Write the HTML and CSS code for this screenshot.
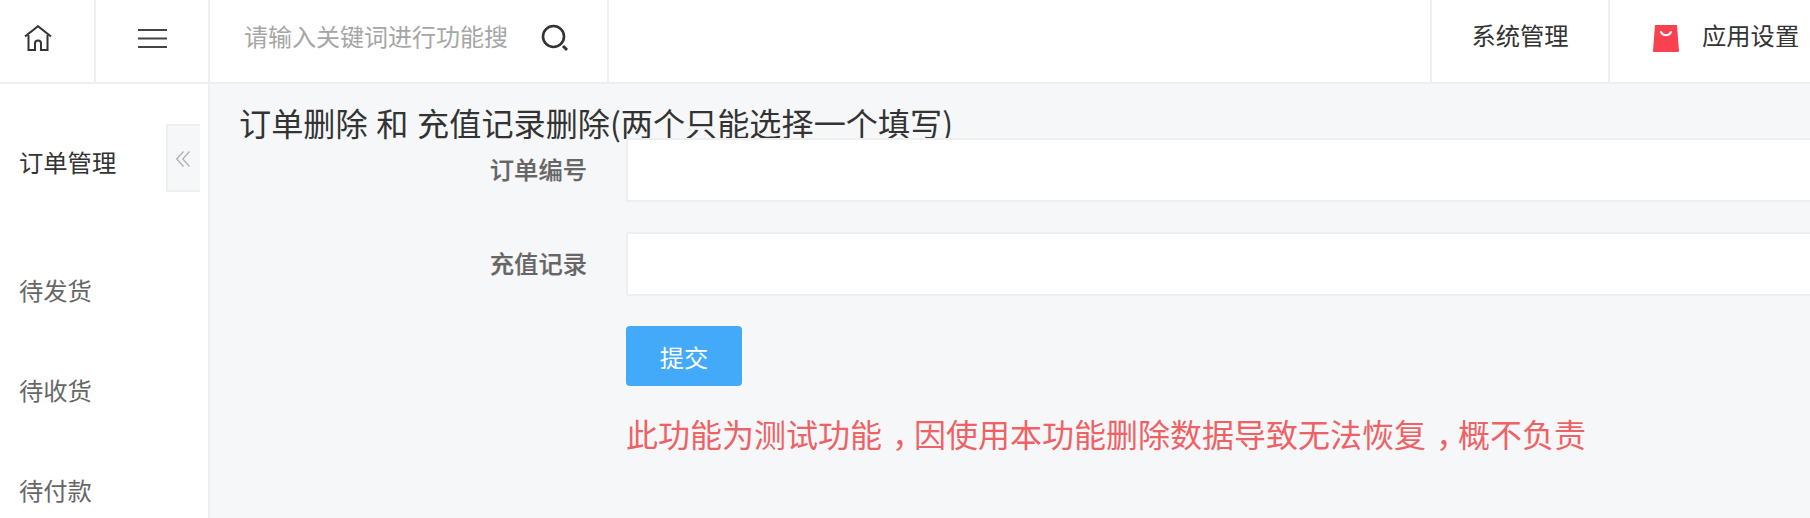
FILE: index.html
```html
<!DOCTYPE html>
<html lang="zh-CN">
<head>
  <meta charset="UTF-8">
  <meta name="viewport" content="width=device-width, initial-scale=1.0">
  <title>订单删除</title>
  <link rel="stylesheet" href="styles.css">
</head>
<body>
  <div class="topbar">
    <a class="cell cell-home">
      <svg width="28" height="26" viewBox="0 0 28 26" fill="none" stroke="#333" stroke-width="2">
        <path d="M1 11.5L14 1.2L27 11.5"/>
        <path d="M4.5 10V25H11V18.5a3 3 0 0 1 6 0V25H23.5V10"/>
      </svg>
    </a>
    <a class="cell cell-menu">
      <svg width="29" height="20" viewBox="0 0 29 20" fill="none" stroke="#444" stroke-width="2">
        <path d="M0 2H29M0 10.500H29M0 19H29"/>
      </svg>
    </a>
    <div class="cell cell-search">
      <input class="search-input" type="text" placeholder="请输入关键词进行功能搜索">
      <svg class="search-icon" width="28" height="28" viewBox="0 0 28 28" fill="none" stroke="#333">
        <circle cx="12.500" cy="12.500" r="10.500" stroke-width="2.600"/>
        <path d="M22 22L26 26" stroke-width="3"/>
      </svg>
    </div>
    <div class="spacer"></div>
    <a class="cell cell-system">系统管理</a>
    <a class="cell cell-app">
      <svg class="bag-icon" width="26" height="27" viewBox="0 0 26 27">
        <path d="M2 0H24L26 26a1 1 0 0 1-1 1H1a1 1 0 0 1-1-1Z" fill="#f9414f"/>
        <path d="M8 7a5.500 5.500 0 0 0 10 0" fill="none" stroke="#fff" stroke-width="2" stroke-linecap="round"/>
      </svg>
      <span>应用设置</span>
    </a>
  </div>

  <div class="main">
    <div class="sidebar">
      <div class="side-title">订单管理</div>
      <a class="side-item">待发货</a>
      <a class="side-item">待收货</a>
      <a class="side-item">待付款</a>
      <div class="collapse">
        <svg width="14" height="16" viewBox="0 0 14 16" fill="none" stroke="#b5b5b5" stroke-width="1.500">
          <path d="M7.500 0.500L0.800 8L7.500 15.500M13.500 0.500L6.800 8L13.500 15.500"/>
        </svg>
      </div>
    </div>

    <div class="content">
      <h3 class="page-title">订单删除 和 充值记录删除(两个只能选择一个填写)</h3>
      <form class="form">
        <div class="form-row">
          <label class="form-label">订单编号</label>
          <input class="form-input" type="text">
        </div>
        <div class="form-row">
          <label class="form-label">充值记录</label>
          <input class="form-input" type="text">
        </div>
        <div class="form-row">
          <span class="form-label"></span>
          <button class="btn" type="button">提交</button>
        </div>
        <div class="form-row">
          <span class="form-label"></span>
          <span class="warning">此功能为测试功能<span class="comma">，</span>因使用本功能删除数据导致无法恢复<span class="comma">，</span>概不负责</span>
        </div>
      </form>
    </div>
  </div>
</body>
</html>
```

FILE: styles.css
```css
html, body {
  height: 100%;
  margin: 0;
  overflow: hidden;
}
body {
  font-family: "Noto Sans CJK SC", "Liberation Sans", sans-serif;
  font-size: 24.3px;
  color: #333;
  background: #f6f7f8;
}

/* top bar */
.topbar {
  display: flex;
  height: 82px;
  background: #fff;
  border-bottom: 2px solid #eee;
}
.cell {
  display: flex;
  align-items: center;
  justify-content: center;
  box-sizing: border-box;
  flex: none;
}
.cell-home {
  width: 96px;
  padding: 0 0 6px 24px;
  border-right: 2px solid #eee;
  justify-content: flex-start;
}
.cell-menu {
  width: 114px;
  padding: 0 0 6px 42px;
  border-right: 2px solid #eee;
  justify-content: flex-start;
}
.cell-search {
  width: 399px;
  padding: 0 38px 12px 34px;
  border-right: 2px solid #eee;
  justify-content: space-between;
}
.search-input {
  width: 263px;
  border: none;
  outline: none;
  padding: 0;
  background: transparent;
  font-family: inherit;
  font-size: 24px;
}
.search-input::placeholder {
  color: #a6a6a6;
}
.search-icon {
  margin-top: 5px;
}
.spacer {
  flex: 1;
}
.cell-system {
  width: 178px;
  padding: 0 0 14px 0;
  border-left: 2px solid #eee;
}
.cell-app {
  width: 202px;
  padding: 0 0 14px 43px;
  gap: 23px;
  justify-content: flex-start;
  border-left: 2px solid #eee;
}
.bag-icon {
  margin-top: 8px;
}

/* sidebar */
.main {
  display: flex;
  height: 434px;
}
.sidebar {
  position: relative;
  box-sizing: border-box;
  width: 210px;
  flex: none;
  padding-left: 19px;
  background: #fff;
  border-right: 2px solid #eee;
}
.side-title {
  margin-top: 60px;
  line-height: 36px;
  margin-bottom: 92px;
}
.side-item {
  display: block;
  line-height: 36px;
  margin-bottom: 64px;
  color: #666;
}
.collapse {
  position: absolute;
  left: 166px;
  top: 40px;
  box-sizing: border-box;
  width: 34px;
  height: 68px;
  background: #f6f7f8;
  border: 2px solid #eee;
  border-right: none;
  display: flex;
  align-items: center;
  justify-content: center;
  padding: 2px 2px 0 0;
}

/* form */
.content {
  flex: 1;
  min-width: 0;
  overflow: hidden;
}
.page-title {
  margin: 22px 0 0 29px;
  font-size: 32.15px;
  font-weight: normal;
  line-height: 32px;
  word-spacing: 1.5px;
  color: #333;
}
.form-row {
  display: flex;
  align-items: center;
  margin-bottom: 30px;
}
.form-label {
  position: relative;
  top: -2px;
  width: 377px;
  flex: none;
  text-align: right;
  font-weight: 500;
  -webkit-text-stroke: 0.2px #666;
  color: #666;
  margin-right: 39px;
}
.form-input {
  box-sizing: border-box;
  width: 1200px;
  height: 64px;
  flex: none;
  background: #fff;
  border: 2px solid #eee;
  border-radius: 2px;
  outline: none;
}
.btn {
  width: 116px;
  height: 60px;
  border: none;
  border-radius: 4px;
  background: #42aaf8;
  color: #fff;
  font-family: inherit;
  font-size: 24.3px;
}
.warning {
  margin-top: -6px;
  font-size: 32px;
  line-height: 46px;
  white-space: nowrap;
  color: #ee6266;
}
.comma {
  padding-left: 10px;
  letter-spacing: -10px;
}
```
